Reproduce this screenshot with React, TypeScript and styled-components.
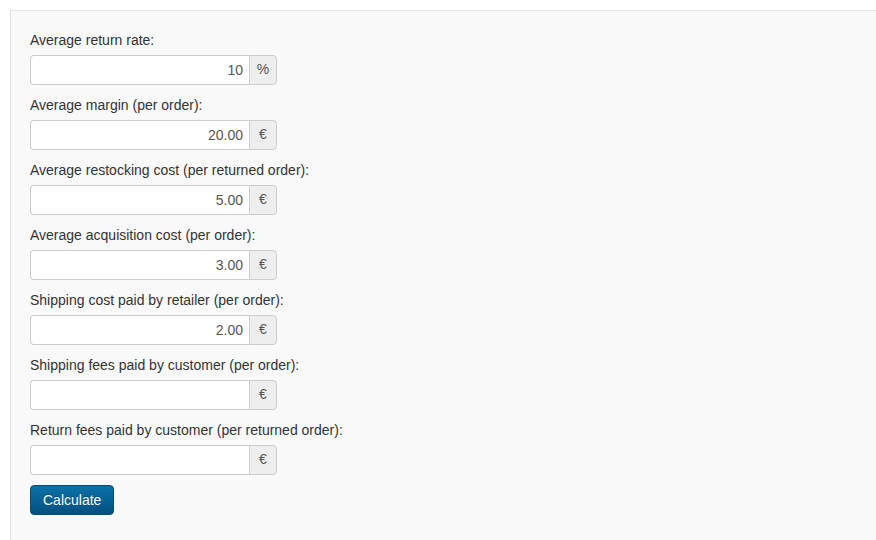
import React from "react";
import styled, { createGlobalStyle } from "styled-components";

const GlobalStyle = createGlobalStyle`
  html, body { margin: 0; padding: 0; background: #ffffff; }
  body { font-family: "Liberation Sans", Arial, sans-serif; font-size: 14px; color: #333333; line-height: 1.42857; }
  * { box-sizing: border-box; }
`;

const Page = styled.div`
  padding: 10px 0 0 10px;
  width: 876px;
  height: 540px;
  overflow: hidden;
`;

const Well = styled.form`
  background: #f9f9f9;
  border-top: 1px solid #e3e3e3;
  border-left: 1px solid #e3e3e3;
  padding: 19px 19px 40px 19px;
  min-height: 560px;
  display: flex;
  flex-direction: column;
  align-items: flex-start;
`;

const Field = styled.div`
  display: flex;
  flex-direction: column;
  margin-bottom: 10px;
`;

const Label = styled.label`
  display: block;
  height: 20px;
  line-height: 20px;
  margin-bottom: 5px;
  font-size: 14px;
  color: #333333;
`;

const InputGroup = styled.div`
  display: flex;
  width: 247px;
  height: 30px;
`;

const Input = styled.input`
  flex: 1;
  min-width: 0;
  height: 30px;
  border: 1px solid #cccccc;
  border-right: 0;
  border-radius: 4px 0 0 4px;
  background: #ffffff;
  padding: 0 6px 0 6px;
  text-align: right;
  font-family: "Liberation Sans", Arial, sans-serif;
  font-size: 14px;
  color: #555555;
  outline: none;
`;

const Addon = styled.span`
  width: 28px;
  height: 30px;
  display: flex;
  align-items: center;
  justify-content: center;
  background: #eeeeee;
  border: 1px solid #cccccc;
  border-radius: 0 4px 4px 0;
  font-size: 14px;
  color: #555555;
`;

const Button = styled.button`
  height: 30px;
  padding: 0 12px;
  border: 1px solid #044a73;
  border-radius: 4px;
  background: linear-gradient(to bottom, #0b72a8 0%, #03507f 100%);
  color: #ffffff;
  font-family: "Liberation Sans", Arial, sans-serif;
  font-size: 14px;
  text-shadow: 0 -1px 0 rgba(0, 0, 0, 0.2);
  cursor: pointer;
`;

const fields: { label: string; value: string; unit: string }[] = [
  { label: "Average return rate:", value: "10", unit: "%" },
  { label: "Average margin (per order):", value: "20.00", unit: "€" },
  { label: "Average restocking cost (per returned order):", value: "5.00", unit: "€" },
  { label: "Average acquisition cost (per order):", value: "3.00", unit: "€" },
  { label: "Shipping cost paid by retailer (per order):", value: "2.00", unit: "€" },
  { label: "Shipping fees paid by customer (per order):", value: "", unit: "€" },
  { label: "Return fees paid by customer (per returned order):", value: "", unit: "€" },
];

export default function App() {
  return (
    <>
      <GlobalStyle />
      <Page>
        <Well onSubmit={(e) => e.preventDefault()}>
          {fields.map((f, i) => (
            <Field key={i}>
              <Label>{f.label}</Label>
              <InputGroup>
                <Input type="text" defaultValue={f.value} />
                <Addon>{f.unit}</Addon>
              </InputGroup>
            </Field>
          ))}
          <Button type="submit">Calculate</Button>
        </Well>
      </Page>
    </>
  );
}
